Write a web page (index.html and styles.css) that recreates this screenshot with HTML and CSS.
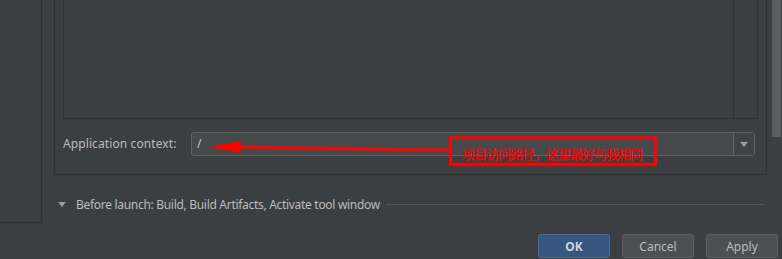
FILE: index.html
```html
<!doctype html>
<html lang="en">
<head>
<meta charset="utf-8">
<title>Run configuration</title>
<link rel="stylesheet" href="styles.css">
</head>
<body>

<div class="dialog">
  <aside class="side-list"></aside>

  <section class="content">
    <div class="config-panel">
      <div class="list-box">
        <div class="list-body"></div>
        <div class="list-col"></div>
      </div>

      <div class="field-row">
        <label class="field-label">Application context:</label>
        <div class="combo">
          <span class="combo-value">/</span>
          <span class="combo-arrow"><i class="tri"></i></span>
        </div>
      </div>
    </div>

    <div class="before-launch">
      <i class="tri"></i>
      <span class="bl-text">Before launch: Build, Build Artifacts, Activate tool window</span>
      <span class="rule"></span>
    </div>

    <div class="actions">
      <button class="btn btn-ok">OK</button>
      <button class="btn">Cancel</button>
      <button class="btn">Apply</button>
    </div>
  </section>
</div>

<div class="scroll-thumb"></div>

<!-- red annotation drawn over the screenshot -->
<svg class="note-arrow" width="782" height="259" viewBox="0 0 782 259">
  <polygon points="209,147 241,141 241,153" fill="#ff0000"/>
  <polyline points="240,147 300,148 365,149 430,150 450,150" fill="none" stroke="#ff0000" stroke-width="3"/>
</svg>
<div class="note-box">项目访问路径，这里最好与我相同</div>

</body>
</html>
```

FILE: styles.css
```css
:root{
  --bg:#3c3f41; --line:#2f3133; --text:#bbbbbb; --field:#45494a; --field-border:#646464;
}
*{box-sizing:border-box;margin:0;padding:0}
body{
  background:var(--bg);color:var(--text);
  font:12px/1 "Noto Sans","Open Sans",sans-serif;
  width:782px;height:259px;overflow:hidden;position:relative;
}
.dialog{display:flex;height:259px}

.side-list{
  width:42px;height:223px;flex:none;
  border-right:1px solid var(--line);border-bottom:1px solid var(--line)
}

.content{flex:1;min-width:0;display:flex;flex-direction:column;padding-left:12px}

/* === config panel =================================== */
.config-panel{
  width:713px;height:175px;
  border:1px solid var(--line);border-top:none;
  padding:0 8px 0 8px;display:flex;flex-direction:column
}
.list-box{
  height:119px;display:flex;
  border:1px solid var(--line);border-top:none
}
.list-body{flex:1}
.list-col{width:24px;border-left:1px solid var(--line)}

.field-row{display:flex;align-items:center;margin-top:13px;padding-right:3px}
.field-label{width:128px;flex:none;color:var(--text);letter-spacing:.1px}
.combo{
  flex:1;height:24px;display:flex;
  background:var(--field);border:1px solid var(--field-border);border-radius:3px
}
.combo-value{flex:1;padding:0 0 0 5px;display:flex;align-items:center;color:#c9c9c9}
.combo-arrow{
  width:21px;display:flex;align-items:center;justify-content:center;
  border-left:1px solid var(--field-border);background:#404344
}
.tri{
  width:0;height:0;display:inline-block;flex:none;
  border-left:4px solid transparent;border-right:4px solid transparent;
  border-top:5px solid #9a9da1
}

/* === before launch ================================== */
.before-launch{
  height:59px;display:flex;align-items:center;gap:10px;padding:0 18px 0 4px
}
.bl-text{white-space:nowrap;letter-spacing:-.3px}
.before-launch .rule{flex:1;height:1px;background:#515557;margin-left:-4px}

/* === buttons ======================================== */
.actions{display:flex;justify-content:flex-end;gap:12px;padding-right:4px}
.btn{
  width:72px;height:24px;border-radius:3px;
  font:12px "Noto Sans","Open Sans",sans-serif;color:var(--text);
  background:#4c5052;border:1px solid #5e6060
}
.btn-ok{background:#365880;border-color:#4a6f95;font-weight:700;color:#cfd3d8}

/* === overlays ======================================= */
.scroll-thumb{
  position:absolute;left:772px;top:0;width:9px;height:137px;background:#5b5d5e
}
.note-arrow{position:absolute;left:0;top:0;pointer-events:none}
.note-box{
  position:absolute;left:449px;top:136px;width:208px;height:30px;
  border:3px solid #ff0000;color:#ff0000;
  font-family:"Noto Sans CJK SC",sans-serif;font-size:13px;font-weight:500;line-height:1;
  letter-spacing:-1px;padding:8px 0 0 10px;white-space:nowrap
}
```
